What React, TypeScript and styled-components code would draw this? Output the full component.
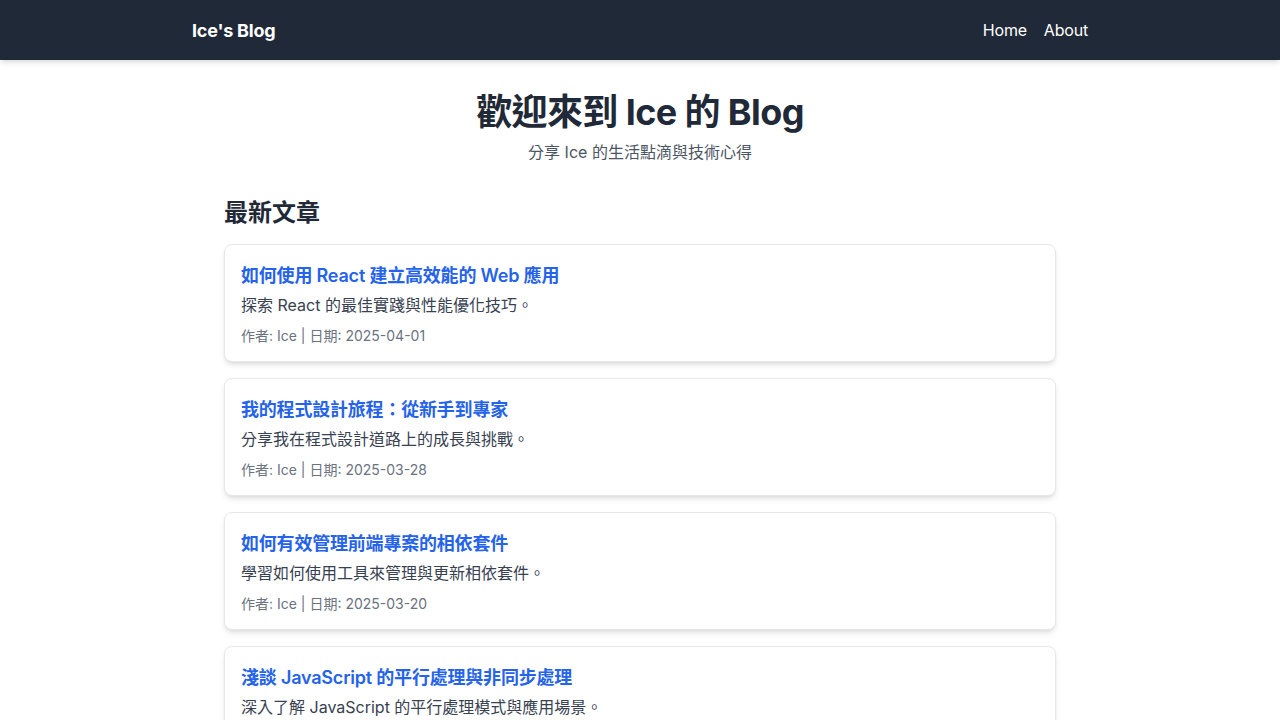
import React from "react";
import styled, { createGlobalStyle } from "styled-components";

const GlobalStyle = createGlobalStyle`
  * { box-sizing: border-box; }
  html, body { margin: 0; padding: 0; background: #ffffff; }
  body {
    font-family: Inter, "Noto Sans CJK TC", "Noto Sans", sans-serif;
    color: #1f2937;
    -webkit-font-smoothing: antialiased;
  }
  h1, h2, h3, p { margin: 0; }
`;

const NavBar = styled.header`
  background: #1f2937;
  height: 60px;
  box-shadow: 0 4px 6px -1px rgba(0,0,0,0.1), 0 2px 4px -2px rgba(0,0,0,0.1);
`;

const NavInner = styled.div`
  max-width: 896px;
  height: 100%;
  margin: 0 auto;
  display: flex;
  align-items: center;
  justify-content: space-between;
`;

const Brand = styled.a`
  color: #ffffff;
  font-size: 18px;
  font-weight: 700;
  text-decoration: none;
  letter-spacing: -0.2px;
`;

const NavLinks = styled.nav`
  display: flex;
  gap: 17px;
`;

const NavLink = styled.a`
  color: #ffffff;
  font-size: 16px;
  letter-spacing: -0.2px;
  text-decoration: none;
`;

const Main = styled.main`
  max-width: 896px;
  margin: 0 auto;
  padding: 32px 32px;
`;

const Hero = styled.section`
  text-align: center;
  margin-bottom: 33px;
`;

const Title = styled.h1`
  font-size: 36px;
  line-height: 40px;
  font-weight: 700;
  letter-spacing: -0.6px;
  color: #1f2937;
`;

const Subtitle = styled.p`
  margin-top: 8px;
  font-size: 16px;
  line-height: 24px;
  color: #4b5563;
`;

const SectionTitle = styled.h2`
  font-size: 24px;
  line-height: 32px;
  font-weight: 700;
  color: #1f2937;
  margin-bottom: 15px;
`;

const PostList = styled.div`
  display: flex;
  flex-direction: column;
  gap: 16px;
`;

const Card = styled.article`
  border: 1px solid #e5e7eb;
  border-radius: 8px;
  padding: 17px 16px 15px;
  background: #ffffff;
  box-shadow: 0 4px 6px -1px rgba(0,0,0,0.1), 0 2px 4px -2px rgba(0,0,0,0.1);
`;

const PostTitle = styled.h3`
  font-size: 18px;
  line-height: 28px;
  font-weight: 600;
  letter-spacing: -0.2px;
  color: #2563eb;
  margin-bottom: 3px;
`;

const PostDesc = styled.p`
  font-size: 16px;
  line-height: 24px;
  color: #374151;
`;

const PostMeta = styled.p`
  margin-top: 9px;
  font-size: 14px;
  line-height: 20px;
  color: #6b7280;
`;

const posts = [
  {
    title: "如何使用 React 建立高效能的 Web 應用",
    desc: "探索 React 的最佳實踐與性能優化技巧。",
    date: "2025-04-01",
  },
  {
    title: "我的程式設計旅程：從新手到專家",
    desc: "分享我在程式設計道路上的成長與挑戰。",
    date: "2025-03-28",
  },
  {
    title: "如何有效管理前端專案的相依套件",
    desc: "學習如何使用工具來管理與更新相依套件。",
    date: "2025-03-20",
  },
  {
    title: "淺談 JavaScript 的平行處理與非同步處理",
    desc: "深入了解 JavaScript 的平行處理模式與應用場景。",
    date: "2025-03-15",
  },
];

export default function App() {
  return (
    <>
      <GlobalStyle />
      <NavBar>
        <NavInner>
          <Brand href="#">Ice's Blog</Brand>
          <NavLinks>
            <NavLink href="#">Home</NavLink>
            <NavLink href="#">About</NavLink>
          </NavLinks>
        </NavInner>
      </NavBar>
      <Main>
        <Hero>
          <Title>歡迎來到 Ice 的 Blog</Title>
          <Subtitle>分享 Ice 的生活點滴與技術心得</Subtitle>
        </Hero>
        <SectionTitle>最新文章</SectionTitle>
        <PostList>
          {posts.map((p) => (
            <Card key={p.title}>
              <PostTitle>{p.title}</PostTitle>
              <PostDesc>{p.desc}</PostDesc>
              <PostMeta>作者: Ice | 日期: {p.date}</PostMeta>
            </Card>
          ))}
        </PostList>
      </Main>
    </>
  );
}
